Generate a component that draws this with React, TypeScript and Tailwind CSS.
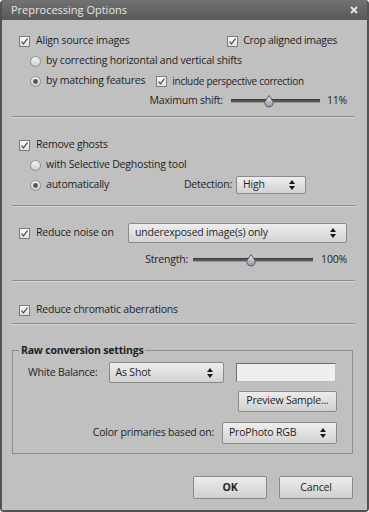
import React from "react";

const Check = ({ checked = true }: { checked?: boolean }) => (
  <svg width="11" height="11" viewBox="0 0 11 11" className="shrink-0">
    <defs>
      <linearGradient id="cbg" x1="0" y1="0" x2="0" y2="1">
        <stop offset="0" stopColor="#fafafa" />
        <stop offset="1" stopColor="#dedede" />
      </linearGradient>
    </defs>
    <rect x="0.5" y="0.5" width="10" height="10" fill="url(#cbg)" stroke="#7c7c7c" />
    {checked && (
      <path d="M2.5 5.5 L4.5 7.8 L8.5 2.5" fill="none" stroke="#3a3a3a" strokeWidth="1.1" />
    )}
  </svg>
);

const Radio = ({ on = false }: { on?: boolean }) => (
  <svg width="11" height="11" viewBox="0 0 11 11" className="shrink-0">
    <defs>
      <linearGradient id="rbg" x1="0" y1="0" x2="0" y2="1">
        <stop offset="0" stopColor="#f4f4f4" />
        <stop offset="1" stopColor="#cfcfcf" />
      </linearGradient>
    </defs>
    <circle cx="5.5" cy="5.5" r="5" fill="url(#rbg)" stroke="#8a8a8a" />
    {on && <circle cx="5.5" cy="5.5" r="2.4" fill="#555" />}
  </svg>
);

const Arrows = () => (
  <svg width="6" height="10" viewBox="0 0 6 10" className="shrink-0">
    <path d="M3 0 L6 4 L0 4 Z" fill="#1a1a1a" />
    <path d="M0 6 L6 6 L3 10 Z" fill="#1a1a1a" />
  </svg>
);

const Slider = ({ width, pos }: { width: number; pos: number }) => (
  <div className="relative h-[14px] flex items-center" style={{ width }}>
    <div className="w-full h-[4px] bg-[#565656] border-t border-[#3c3c3c] border-b border-b-[#9a9a9a]" />
    <svg
      width="10"
      height="13"
      viewBox="0 0 10 13"
      className="absolute top-[1px]"
      style={{ left: pos - 5 }}
    >
      <defs>
        <linearGradient id="thg" x1="0" y1="0" x2="0" y2="1">
          <stop offset="0" stopColor="#eef2f6" />
          <stop offset="1" stopColor="#8794a2" />
        </linearGradient>
      </defs>
      <path d="M5 0.5 L9 6.5 A4.2 4.2 0 1 1 1 6.5 Z" fill="url(#thg)" stroke="#5a5a5a" />
    </svg>
  </div>
);

const Select = ({ label, className }: { label: string; className: string }) => (
  <div
    className={`flex items-center justify-between pl-[6px] pr-[10px] border border-[#8a8a8a] rounded-[2px] bg-gradient-to-b from-[#eeeeee] to-[#d2d2d2] ${className}`}
  >
    <span>{label}</span>
    <Arrows />
  </div>
);

const Divider = ({ className = "" }: { className?: string }) => (
  <div className={`ml-[10px] mr-[12px] h-[2px] border-t border-[#8c8c8c] border-b border-b-[#d4d4d4] ${className}`} />
);

const Button = ({ children, bold = false }: { children: React.ReactNode; bold?: boolean }) => (
  <div
    className={`flex items-center justify-center w-[74px] h-[23px] border border-[#8a8a8a] rounded-[2px] bg-gradient-to-b from-[#ececec] to-[#d0d0d0] text-[#222] ${bold ? "font-bold" : ""}`}
  >
    {children}
  </div>
);

export default function App() {
  return (
    <div className="w-[369px] h-[512px] bg-[#525252] rounded-[4px] px-[2px] pb-[2px] flex flex-col font-['Open_Sans',sans-serif] text-[10.5px] tracking-[-0.2px] text-[#1f1f1f]">
      <div className="h-[20px] flex items-center justify-between pl-[9px] pr-[9px] bg-gradient-to-b from-[#727272] to-[#585858] text-[#e6e6e6] text-[11px] tracking-normal">
        <span>Preprocessing Options</span>
        <svg width="8" height="8" viewBox="0 0 8 8">
          <path d="M1 1 L7 7 M7 1 L1 7" stroke="#e0e0e0" strokeWidth="2" />
        </svg>
      </div>

      <div className="flex-1 bg-[#c0c0c0] flex flex-col pt-[11px]">
        {/* Align */}
        <div className="h-[20px] flex items-center pl-[17px]">
          <Check />
          <span className="ml-[6px]">Align source images</span>
          <div className="ml-auto mr-[30px] flex items-center">
            <Check />
            <span className="ml-[5px] tracking-[-0.3px]">Crop aligned images</span>
          </div>
        </div>
        <div className="h-[20px] flex items-center pl-[28px]">
          <Radio />
          <span className="ml-[5px]">by correcting horizontal and vertical shifts</span>
        </div>
        <div className="h-[20px] flex items-center pl-[28px]">
          <Radio on />
          <span className="ml-[5px]">by matching features</span>
          <div className="ml-[11px] flex items-center">
            <Check />
            <span className="ml-[5px] text-[10px] tracking-[-0.3px]">include perspective correction</span>
          </div>
        </div>
        <div className="h-[20px] flex items-center justify-end pr-[20px]">
          <span>Maximum shift:</span>
          <div className="ml-[8px]">
            <Slider width={89} pos={38} />
          </div>
          <span className="ml-[7px]">11%</span>
        </div>
        <Divider className="mt-[5px]" />

        {/* Ghosts */}
        <div className="h-[20px] flex items-center pl-[17px] mt-[17px]">
          <Check />
          <span className="ml-[6px]">Remove ghosts</span>
        </div>
        <div className="h-[20px] flex items-center pl-[28px]">
          <Radio />
          <span className="ml-[5px]">with Selective Deghosting tool</span>
        </div>
        <div className="h-[20px] flex items-center pl-[28px]">
          <Radio on />
          <span className="ml-[5px]">automatically</span>
          <span className="ml-auto">Detection:</span>
          <Select label="High" className="ml-[4px] mr-[61px] w-[70px] h-[18px]" />
        </div>
        <Divider className="mt-[10px]" />

        {/* Noise */}
        <div className="h-[20px] flex items-center pl-[17px] mt-[16px]">
          <Check />
          <span className="ml-[6px]">Reduce noise on</span>
          <Select label="underexposed image(s) only" className="ml-auto mr-[20px] w-[219px] h-[20px]" />
        </div>
        <div className="h-[20px] flex items-center justify-end pr-[20px] mt-[7px]">
          <span>Strength:</span>
          <div className="ml-[5px]">
            <Slider width={120} pos={58} />
          </div>
          <span className="ml-[8px]">100%</span>
        </div>
        <Divider className="mt-[10px]" />

        <div className="h-[20px] flex items-center pl-[17px] mt-[18px]">
          <Check />
          <span className="ml-[6px]">Reduce chromatic aberrations</span>
        </div>
        <Divider className="mt-[3px]" />

        {/* Raw */}
        <fieldset className="ml-[10px] mr-[14px] mt-[18px] border border-[#8e8e8e] h-[111px]">
          <legend className="ml-[6px] px-[2px] font-bold">Raw conversion settings</legend>
          <div className="h-[22px] flex items-center pl-[15px] mt-[3px]">
            <span>White Balance:</span>
            <Select label="As Shot" className="ml-[11px] w-[115px] h-[21px]" />
            <div className="ml-[12px] w-[100px] h-[19px] bg-[#efefef] border border-[#6e6e6e] border-b-[#bdbdbd] border-r-[#bdbdbd]" />
          </div>
          <div className="flex justify-end pr-[15px] mt-[7px]">
            <div className="w-[99px] h-[21px] flex items-center justify-center border border-[#8a8a8a] rounded-[2px] bg-gradient-to-b from-[#ececec] to-[#d0d0d0]">
              Preview Sample...
            </div>
          </div>
          <div className="h-[22px] flex items-center justify-end pr-[15px] mt-[10px]">
            <span>Color primaries based on:</span>
            <Select label="ProPhoto RGB" className="ml-[8px] w-[115px] h-[22px]" />
          </div>
        </fieldset>

        <div className="flex justify-end gap-[12px] pr-[14px] mt-[22px]">
          <Button bold>OK</Button>
          <Button>Cancel</Button>
        </div>
      </div>
    </div>
  );
}
